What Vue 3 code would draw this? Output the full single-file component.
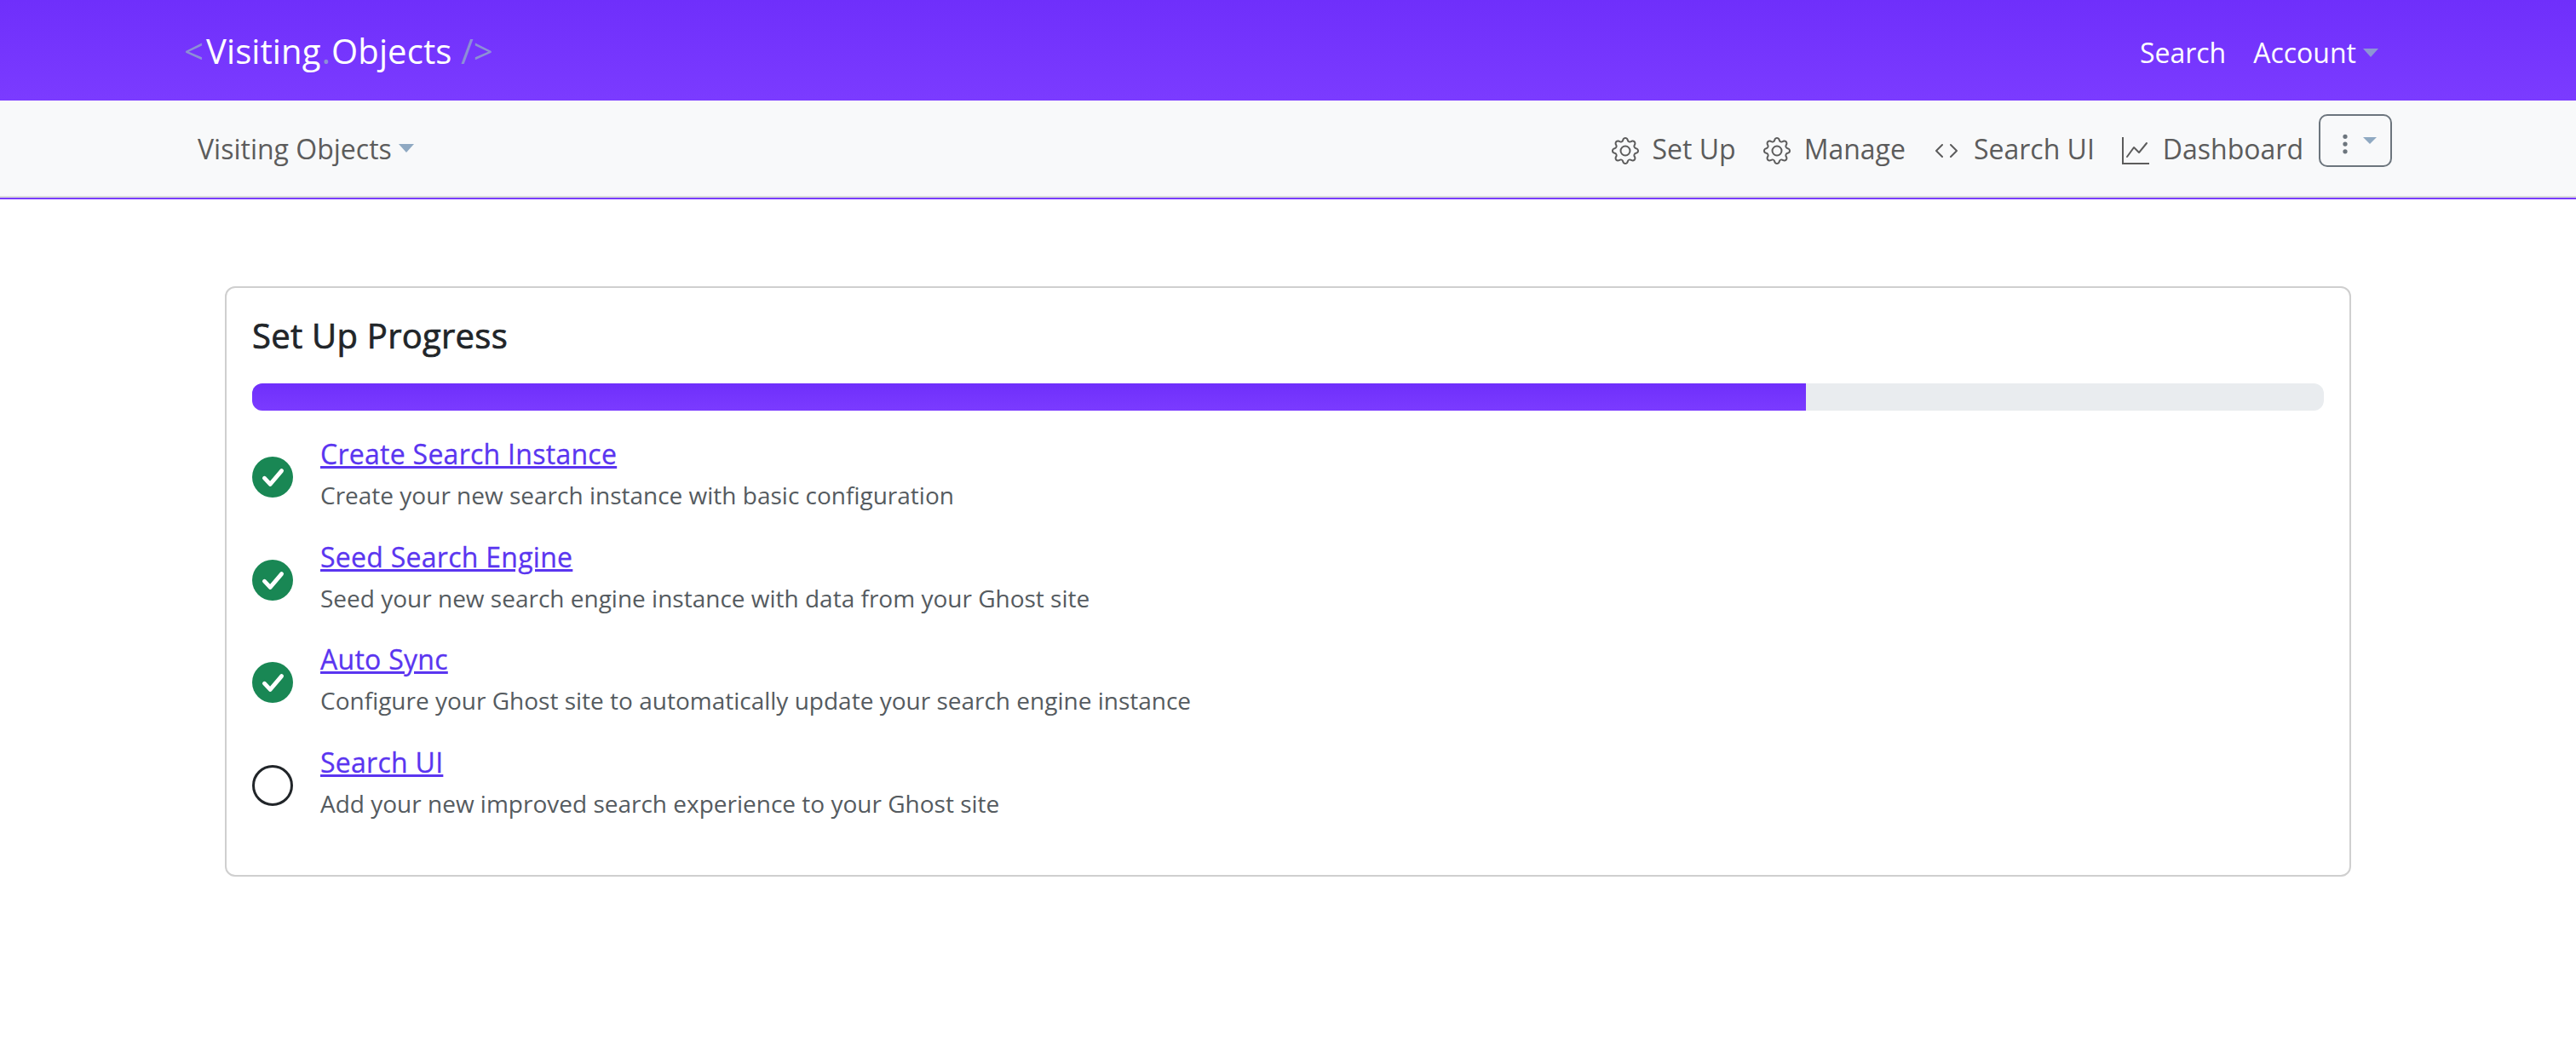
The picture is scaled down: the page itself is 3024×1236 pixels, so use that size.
<script setup>
const steps = [
  { title: 'Create Search Instance', text: 'Create your new search instance with basic configuration', done: true },
  { title: 'Seed Search Engine', text: 'Seed your new search engine instance with data from your Ghost site', done: true },
  { title: 'Auto Sync', text: 'Configure your Ghost site to automatically update your search engine instance', done: true },
  { title: 'Search UI', text: 'Add your new improved search experience to your Ghost site', done: false },
]
const gear1 = 'M8 4.754a3.246 3.246 0 1 0 0 6.492 3.246 3.246 0 0 0 0-6.492zM5.754 8a2.246 2.246 0 1 1 4.492 0 2.246 2.246 0 0 1-4.492 0z'
const gear2 = 'M9.796 1.343c-.527-1.79-3.065-1.79-3.592 0l-.094.319a.873.873 0 0 1-1.255.52l-.292-.16c-1.64-.892-3.433.902-2.54 2.541l.159.292a.873.873 0 0 1-.52 1.255l-.319.094c-1.79.527-1.79 3.065 0 3.592l.319.094a.873.873 0 0 1 .52 1.255l-.16.292c-.892 1.64.901 3.434 2.541 2.54l.292-.159a.873.873 0 0 1 1.255.52l.094.319c.527 1.79 3.065 1.79 3.592 0l.094-.319a.873.873 0 0 1 1.255-.52l.292.16c1.64.893 3.434-.902 2.54-2.541l-.159-.292a.873.873 0 0 1 .52-1.255l.319-.094c1.79-.527 1.79-3.065 0-3.592l-.319-.094a.873.873 0 0 1-.52-1.255l.16-.292c.893-1.64-.902-3.433-2.541-2.54l-.292.159a.873.873 0 0 1-1.255-.52l-.094-.319zm-2.633.283c.246-.835 1.428-.835 1.674 0l.094.319a1.873 1.873 0 0 0 2.693 1.115l.291-.16c.764-.415 1.6.42 1.184 1.185l-.159.292a1.873 1.873 0 0 0 1.116 2.692l.318.094c.835.246.835 1.428 0 1.674l-.319.094a1.873 1.873 0 0 0-1.115 2.693l.16.291c.415.764-.42 1.6-1.185 1.184l-.291-.159a1.873 1.873 0 0 0-2.693 1.116l-.094.318c-.246.835-1.428.835-1.674 0l-.094-.319a1.873 1.873 0 0 0-2.692-1.115l-.292.16c-.764.415-1.6-.42-1.184-1.185l.159-.291A1.873 1.873 0 0 0 1.945 8.93l-.319-.094c-.835-.246-.835-1.428 0-1.674l.319-.094A1.873 1.873 0 0 0 3.06 4.377l-.16-.292c-.415-.764.42-1.6 1.185-1.184l.292.159a1.873 1.873 0 0 0 2.692-1.115l.094-.319z'
const code = 'M5.854 4.854a.5.5 0 1 0-.708-.708l-3.5 3.5a.5.5 0 0 0 0 .708l3.5 3.5a.5.5 0 0 0 .708-.708L2.707 8l3.147-3.146zm4.292 0a.5.5 0 0 1 .708-.708l3.5 3.5a.5.5 0 0 1 0 .708l-3.5 3.5a.5.5 0 0 1-.708-.708L13.293 8l-3.147-3.146z'
const graph = 'M0 0h1v15h15v1H0V0Zm14.817 3.113a.5.5 0 0 1 .07.704l-4.5 5.5a.5.5 0 0 1-.74.037L7.06 6.767l-3.656 5.027a.5.5 0 0 1-.808-.588l4-5.5a.5.5 0 0 1 .758-.06l2.609 2.61 4.15-5.073a.5.5 0 0 1 .704-.07Z'
const navItems = [
  { label: 'Set Up', paths: [gear1, gear2] },
  { label: 'Manage', paths: [gear1, gear2] },
  { label: 'Search UI', paths: [code] },
  { label: 'Dashboard', paths: [graph] },
]
</script>

<template>
  <div class="page">
    <header class="topbar">
      <a class="brand"><span class="dim lt">&lt;</span>Visiting<span class="dim dot">.</span>Objects <span class="dim">/&gt;</span></a>
      <nav class="topnav">
        <a>Search</a>
        <a class="caret-item">Account<i class="caret"></i></a>
      </nav>
    </header>
    <div class="subbar">
      <a class="caret-item">Visiting Objects<i class="caret blue"></i></a>
      <nav class="subnav">
        <a v-for="n in navItems" :key="n.label" class="navlink">
          <svg class="ico" viewBox="0 0 16 16" fill="currentColor"><path v-for="p in n.paths" :key="p" :d="p" /></svg>
          {{ n.label }}
        </a>
        <button class="more" type="button">
          <svg class="dots" viewBox="0 0 16 16" fill="currentColor"><path d="M9.5 13a1.5 1.5 0 1 1-3 0 1.5 1.5 0 0 1 3 0zm0-5a1.5 1.5 0 1 1-3 0 1.5 1.5 0 0 1 3 0zm0-5a1.5 1.5 0 1 1-3 0 1.5 1.5 0 0 1 3 0z"/></svg>
          <i class="caret blue"></i>
        </button>
      </nav>
    </div>
    <main class="content">
      <section class="card">
        <h2>Set Up Progress</h2>
        <div class="track"><div class="fill"></div></div>
        <ul class="steps">
          <li v-for="s in steps" :key="s.title" class="step">
            <svg v-if="s.done" class="status" viewBox="0 0 24 24">
              <circle cx="12" cy="12" r="12" fill="#198754" />
              <path d="M7.2 12.6L10.6 16.2L17.3 8.3" fill="none" stroke="#fff" stroke-width="2.4" stroke-linecap="round" stroke-linejoin="round" />
            </svg>
            <svg v-else class="status" viewBox="0 0 24 24">
              <circle cx="12" cy="12" r="11.25" fill="none" stroke="#212529" stroke-width="1.5" />
            </svg>
            <div class="step-text">
              <a class="link">{{ s.title }}</a>
              <p>{{ s.text }}</p>
            </div>
          </li>
        </ul>
      </section>
    </main>
  </div>
</template>

<style>
body { margin: 0; background: #fff; }
</style>

<style scoped>
.page {
  width: 3024px;
  font-family: "Open Sans", "Noto Sans", sans-serif;
  font-size: 32px;
  color: #212529;
}
a { text-decoration: none; }
.topbar {
  box-sizing: border-box;
  height: 118px;
  background: linear-gradient(180deg, #6f2ffb, #7b3bff);
  display: flex;
  align-items: center;
  justify-content: space-between;
  padding: 5px 232px 0 216px;
  color: #fff;
}
.brand { font-size: 40px; line-height: 1.2; margin-top: -4px; letter-spacing: 0.1px; }
.dim { color: #8d8fd6; }
.lt { margin-right: 3px; }
.dot { margin: 0 1px; }
.topnav { display: flex; gap: 32px; }
.caret-item { display: inline-flex; align-items: center; }
.caret {
  display: inline-block;
  margin-left: 8px;
  border-left: 9px solid transparent;
  border-right: 9px solid transparent;
  border-top: 10px solid #8d96d4;
}
.blue { border-top-color: #8fa9c2; }
.subbar {
  box-sizing: border-box;
  height: 116px;
  background: #f8f9fa;
  border-bottom: 2px solid #7a3dfb;
  box-shadow: inset 0 -2px 0 #dcdcdc;
  display: flex;
  align-items: center;
  justify-content: space-between;
  padding: 0 216px 2px 232px;
  color: #5c5c5c;
}
.subnav { display: flex; align-items: center; gap: 32px; }
.navlink { display: inline-flex; align-items: center; gap: 16px; }
.ico { width: 32px; height: 32px; flex: none; margin-top: 6px; }
.more {
  box-sizing: border-box;
  width: 86px;
  height: 62px;
  margin: -18px 0 0 -14px;
  padding: 0 0 0 15px;
  display: inline-flex;
  align-items: center;
  background: transparent;
  border: 2px solid #6c757d;
  border-radius: 10px;
  color: #6c757d;
}
.more .caret {
  margin-left: 7px;
  border-left-width: 8px;
  border-right-width: 8px;
  border-top-width: 8px;
}
.dots { width: 28px; height: 28px; margin-top: 8px; }
.content { padding-top: 102px; }
.card {
  box-sizing: border-box;
  width: 2496px;
  margin: 0 auto;
  padding: 32px 30px 60px;
  border: 2px solid #cfcfcf;
  border-radius: 12px;
  background: #fff;
}
h2 {
  margin: 0;
  font-size: 40px;
  font-weight: 500;
  line-height: 48px;
  letter-spacing: 0.25px;
  -webkit-text-stroke: 0.7px #212529;
}
.track {
  height: 32px;
  margin-top: 32px;
  border-radius: 12px;
  background: #e9ecef;
  overflow: hidden;
}
.fill { width: 75%; height: 100%; background: linear-gradient(180deg, #6f2ffb, #7b3bff); }
.steps { list-style: none; margin: 27px 0 0; padding: 0; display: flex; flex-direction: column; gap: 24.5px; }
.step { display: flex; align-items: flex-start; gap: 32px; }
.status { width: 48px; height: 48px; flex: none; margin-top: 27px; }
.step-text { display: flex; flex-direction: column; }
.link {
  color: #5a35f0;
  text-decoration: underline;
  font-weight: 500;
  line-height: 48px;
  letter-spacing: 0.27px;
  -webkit-text-stroke: 0.3px #5a35f0;
  align-self: flex-start;
}
p { margin: 0; color: #555b60; font-size: 28px; line-height: 48px; }
</style>
